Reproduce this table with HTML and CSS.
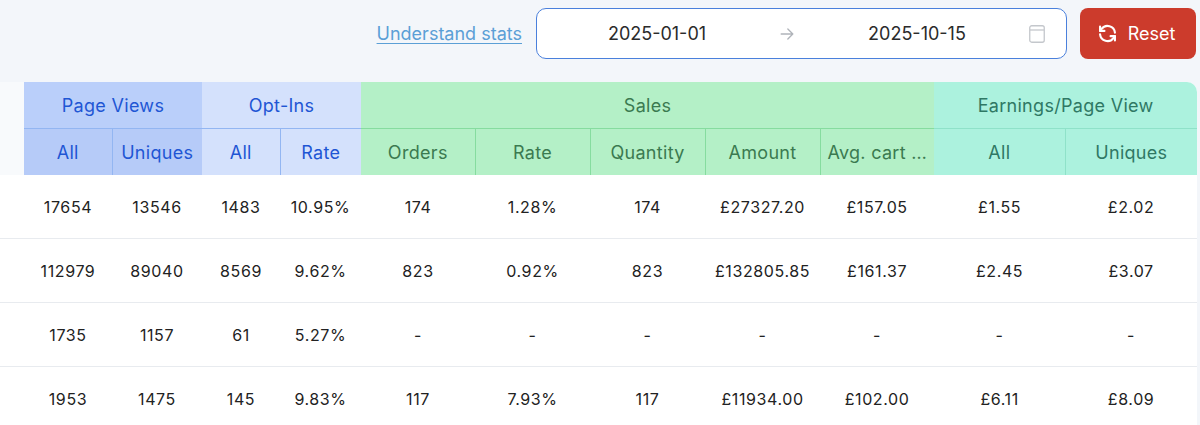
FILE: index.html
```html
<!DOCTYPE html>
<html>
<head>
<meta charset="utf-8">
<link rel="stylesheet" href="styles.css">
</head>
<body>
<div class="toolbar">
  <a class="stats-link" href="#">Understand stats</a>
  <div class="range">
    <span class="range-val">2025-01-01</span>
    <svg class="range-arrow" viewBox="0 0 24 24" width="20" height="20"><path d="M5 12h14M13 6l6 6-6 6" fill="none" stroke="#b0b4ba" stroke-width="1.6" stroke-linecap="round" stroke-linejoin="round"/></svg>
    <span class="range-val">2025-10-15</span>
    <svg class="range-cal" viewBox="0 0 16 18" width="16" height="18"><rect x="0.75" y="0.75" width="14.5" height="16.5" rx="2" fill="none" stroke="#c4c7cc" stroke-width="1.3"/><path d="M1 5h14" stroke="#c4c7cc" stroke-width="1.3"/></svg>
  </div>
  <button class="reset-btn">
    <svg viewBox="0 0 24 24" width="21" height="21" fill="none" stroke="#fff" stroke-width="2.4" stroke-linecap="round" stroke-linejoin="round"><path d="M20.5 11a8.5 8.5 0 0 0-15.3-4.2L3.5 9"/><path d="M3.5 4v5h5"/><path d="M3.5 13a8.5 8.5 0 0 0 15.3 4.2L20.5 15"/><path d="M15.5 15h5v5"/></svg>
    <span>Reset</span>
  </button>
</div>
<div class="card">
  <table class="stats">
    <colgroup>
      <col style="width:24px"><col style="width:88px"><col style="width:90px"><col style="width:78px"><col style="width:81px">
      <col style="width:114px"><col style="width:115px"><col style="width:115px"><col style="width:115px"><col style="width:114px">
      <col style="width:131px"><col style="width:132px">
    </colgroup>
    <thead>
      <tr class="group-row">
        <th class="stub" rowspan="2"></th>
        <th class="pv" colspan="2">Page Views</th>
        <th class="oi" colspan="2">Opt-Ins</th>
        <th class="sa" colspan="5">Sales</th>
        <th class="ea corner" colspan="2">Earnings/Page View</th>
      </tr>
      <tr class="sub-row">
        <th class="pv">All</th>
        <th class="pv">Uniques</th>
        <th class="oi">All</th>
        <th class="oi">Rate</th>
        <th class="sa">Orders</th>
        <th class="sa">Rate</th>
        <th class="sa">Quantity</th>
        <th class="sa">Amount</th>
        <th class="sa">Avg. cart …</th>
        <th class="ea">All</th>
        <th class="ea">Uniques</th>
      </tr>
    </thead>
    <tbody>
      <tr><td></td><td>17654</td><td>13546</td><td>1483</td><td>10.95%</td><td>174</td><td>1.28%</td><td>174</td><td>£27327.20</td><td>£157.05</td><td>£1.55</td><td>£2.02</td></tr>
      <tr><td></td><td>112979</td><td>89040</td><td>8569</td><td>9.62%</td><td>823</td><td>0.92%</td><td>823</td><td>£132805.85</td><td>£161.37</td><td>£2.45</td><td>£3.07</td></tr>
      <tr><td></td><td>1735</td><td>1157</td><td>61</td><td>5.27%</td><td>-</td><td>-</td><td>-</td><td>-</td><td>-</td><td>-</td><td>-</td></tr>
      <tr><td></td><td>1953</td><td>1475</td><td>145</td><td>9.83%</td><td>117</td><td>7.93%</td><td>117</td><td>£11934.00</td><td>£102.00</td><td>£6.11</td><td>£8.09</td></tr>
    </tbody>
  </table>
</div>
</body>
</html>
```

FILE: styles.css
```css
html, body {
  margin: 0;
  padding: 0;
  background: #f3f6fa;
  font-family: Inter, "Noto Sans", sans-serif;
  overflow: hidden;
}

.toolbar {
  display: flex;
  justify-content: flex-end;
  align-items: center;
  height: 82px;
  padding-right: 4px;
  box-sizing: border-box;
  padding-bottom: 15px;
}

.stats-link {
  color: #5b9fd6;
  font-size: 18px;
  text-decoration: underline;
  text-underline-offset: 3px;
  text-decoration-thickness: 1px;
  margin-right: 14px;
}

.range {
  display: flex;
  align-items: center;
  width: 531px;
  height: 51px;
  box-sizing: border-box;
  border: 1.5px solid #4a80dc;
  border-radius: 10px;
  background: #fff;
  padding: 0 20px 0 10px;
}

.range-val {
  width: 220px;
  text-align: center;
  font-size: 18px;
  color: #2b2b2b;
}

.range-arrow {
  margin: 0 10px;
}

.range-cal {
  margin-left: 2px;
}

.reset-btn {
  margin-left: 13px;
  width: 116px;
  height: 51px;
  display: flex;
  align-items: center;
  justify-content: center;
  gap: 10px;
  background: #cc3b2c;
  border: none;
  border-radius: 8px;
  color: #fff;
  font-family: Inter, "Noto Sans", sans-serif;
  font-size: 18px;
  padding: 0 4px 0 0;
}

.card {
  width: 1197px;
  background: #fff;
  border-top-right-radius: 10px;
  overflow: hidden;
}

.stats {
  width: 1197px;
  table-layout: fixed;
  border-collapse: collapse;
}

.stats th {
  font-weight: 400;
  font-size: 18px;
  letter-spacing: 0.3px;
  padding: 0 4px;
  white-space: nowrap;
  overflow: hidden;
  text-overflow: ellipsis;
}

.group-row th {
  height: 46px;
}

.sub-row th {
  height: 46px;
}

.stats th.stub {
  background: #f8fafc;
}

.stats .pv { background: #bacffa; color: #1f56d4; }
.stats .oi { background: #d4e1fc; color: #1f56d4; }
.stats .sa { background: #b4f0c7; color: #3b7a50; }
.stats .ea { background: #acf2de; color: #2f7864; }

.sub-row .pv { background: #b6cbf8; }

.group-row .pv, .group-row .oi { border-bottom: 1px solid #93b6f2; }
.group-row .sa { border-bottom: 1px solid #86dc9f; }
.group-row .ea { border-bottom: 1px solid #8fe2c9; }

.sub-row .pv + .pv,
.sub-row .oi + .oi { border-left: 1px solid #93b6f2; }
.sub-row .sa + .sa { border-left: 1px solid #86dc9f; }
.sub-row .ea + .ea { border-left: 1px solid #8fe2c9; }

.stats td {
  height: 63px;
  text-align: center;
  font-size: 16px;
  letter-spacing: 0.6px;
  color: #222;
  border-bottom: 1px solid #e8ebef;
  padding: 0;
  white-space: nowrap;
}
```
